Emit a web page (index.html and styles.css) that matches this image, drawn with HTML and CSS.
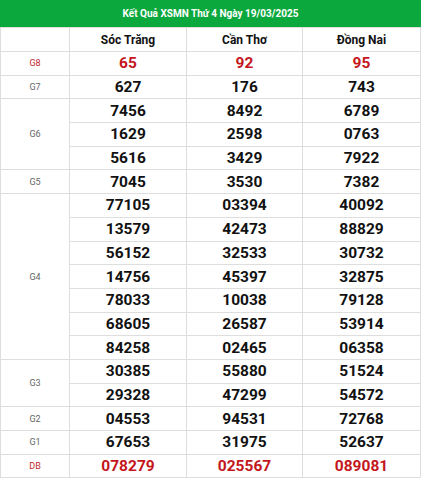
FILE: index.html
```html
<!DOCTYPE html>
<html lang="vi">
<head>
<meta charset="utf-8">
<link rel="stylesheet" href="styles.css">
</head>
<body>
<table class="kq">
  <caption class="title">Kết Quả XSMN Thứ 4 Ngày 19/03/2025</caption>
  <colgroup><col class="c0"><col class="c1"><col class="c2"><col class="c3"></colgroup>
  <tr class="head"><th></th><th>Sóc Trăng</th><th>Cần Thơ</th><th>Đồng Nai</th></tr>
  <tr class="red"><td class="lbl">G8</td><td>65</td><td>92</td><td>95</td></tr>
  <tr><td class="lbl">G7</td><td>627</td><td>176</td><td>743</td></tr>
  <tr><td class="lbl" rowspan="3">G6</td><td>7456</td><td>8492</td><td>6789</td></tr>
  <tr><td>1629</td><td>2598</td><td>0763</td></tr>
  <tr><td>5616</td><td>3429</td><td>7922</td></tr>
  <tr><td class="lbl">G5</td><td>7045</td><td>3530</td><td>7382</td></tr>
  <tr><td class="lbl" rowspan="7">G4</td><td>77105</td><td>03394</td><td>40092</td></tr>
  <tr><td>13579</td><td>42473</td><td>88829</td></tr>
  <tr><td>56152</td><td>32533</td><td>30732</td></tr>
  <tr><td>14756</td><td>45397</td><td>32875</td></tr>
  <tr><td>78033</td><td>10038</td><td>79128</td></tr>
  <tr><td>68605</td><td>26587</td><td>53914</td></tr>
  <tr><td>84258</td><td>02465</td><td>06358</td></tr>
  <tr><td class="lbl" rowspan="2">G3</td><td>30385</td><td>55880</td><td>51524</td></tr>
  <tr><td>29328</td><td>47299</td><td>54572</td></tr>
  <tr><td class="lbl">G2</td><td>04553</td><td>94531</td><td>72768</td></tr>
  <tr><td class="lbl">G1</td><td>67653</td><td>31975</td><td>52637</td></tr>
  <tr class="red"><td class="lbl">DB</td><td>078279</td><td>025567</td><td>089081</td></tr>
</table>
</body>
</html>
```
FILE: styles.css
```css
html, body {
  margin: 0;
  padding: 0;
  background: #fff;
}
.kq {
  width: 420px;
  border-collapse: collapse;
  table-layout: fixed;
  font-family: Roboto, "Noto Sans", sans-serif;
}
.c0 { width: 69px; }
.c1 { width: 117px; }
.c2 { width: 116px; }
.c3 { width: 118px; }
.title {
  background: #0ba83d;
  color: #fff;
  font-weight: 700;
  font-size: 10px;
  height: 27px;
  line-height: 27px;
  text-align: center;
  padding: 0;
}
.kq th, .kq td {
  border: 1px solid #dedede;
  text-align: center;
  padding: 0;
  height: 22.7px;
  color: #111;
}
.kq th {
  font-size: 12px;
  font-weight: 700;
  height: 23px;
}
.kq td {
  font-size: 15.5px;
  font-weight: 700;
  line-height: 20px;
}
.kq td.lbl {
  font-size: 9px;
  font-weight: 400;
  color: #666;
}
.red td { color: #c4161c; }
.red td.lbl { color: #c0272d; }
```
